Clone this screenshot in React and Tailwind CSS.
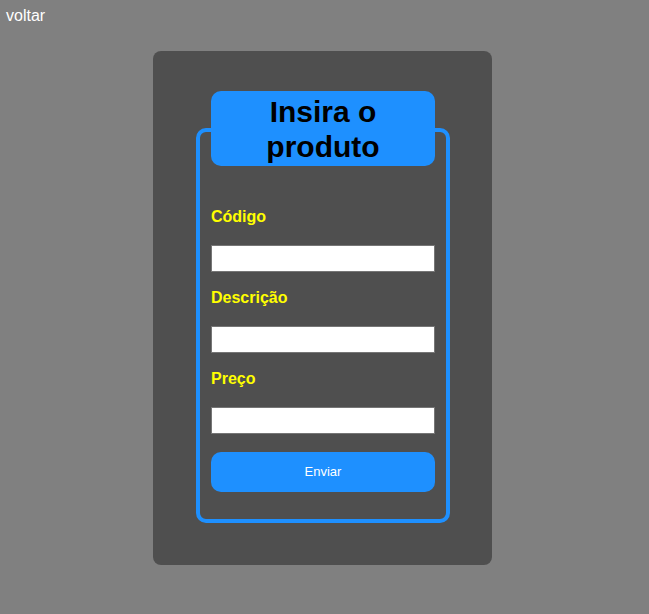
import React from 'react';

export default function App() {
  const fields = ['Código', 'Descrição', 'Preço'];

  return (
    <div className="min-h-[614px] bg-[#808080] pb-[49px]" style={{ fontFamily: '"Liberation Sans", Arial, sans-serif' }}>
      <div className="h-[32px] px-[6px] flex items-center text-white text-[16px]">voltar</div>

      <div className="pl-[153px] mt-[19px]">
        <div className="w-[339px] h-[514px] bg-[#4f4f4f] rounded-[8px] pt-[77px] px-[43px]">
          <div className="w-[254px] border-[4px] border-[#1e90ff] rounded-[10px] px-[11px] pb-[27px]">
            <div className="-mt-[41px] h-[75px] bg-[#1e90ff] rounded-[10px] flex items-center justify-center text-center text-black font-bold text-[30px] leading-[35px]">
              Insira o<br />produto
            </div>

            <form className="flex flex-col mt-[42px]" onSubmit={(e) => e.preventDefault()}>
              {fields.map((f, i) => (
                <div key={f} className={i > 0 ? 'mt-[17px]' : ''}>
                  <label className="block text-[#ffff00] font-bold text-[16px] leading-[18px]">{f}</label>
                  <input
                    type="text"
                    className="block mt-[19px] w-full h-[27px] bg-white border border-[#767676] px-1 text-[13px]"
                  />
                </div>
              ))}
              <button
                type="submit"
                className="mt-[18px] h-[40px] w-full bg-[#1e90ff] rounded-[10px] text-white text-[13px]"
              >
                Enviar
              </button>
            </form>
          </div>
        </div>
      </div>
    </div>
  );
}
